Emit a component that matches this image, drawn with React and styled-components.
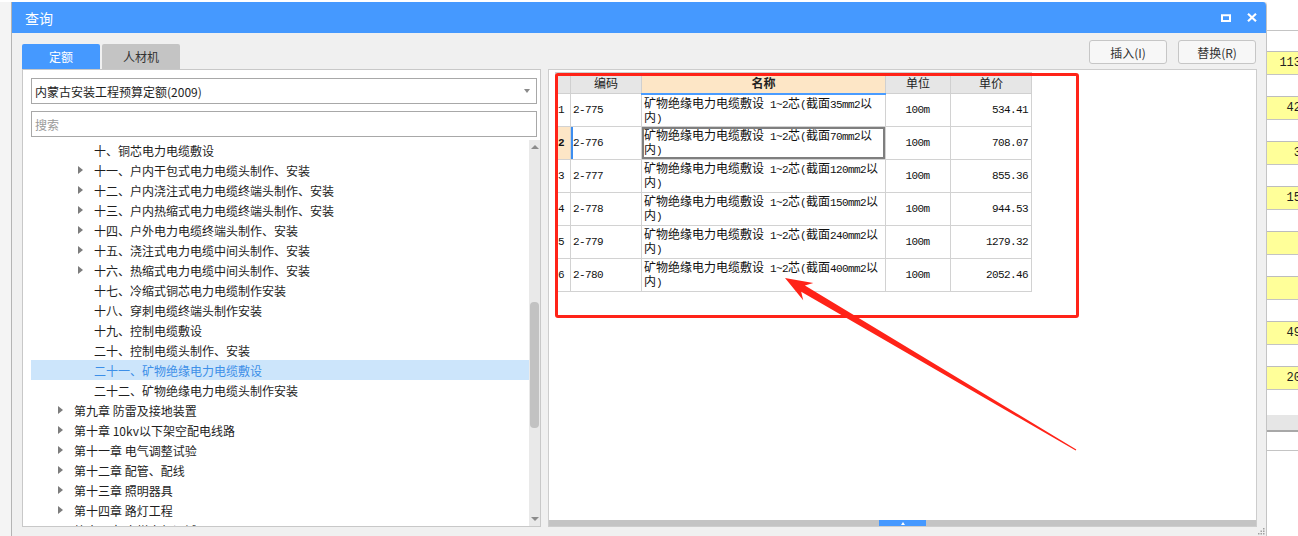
import React from 'react';
import styled, { createGlobalStyle } from 'styled-components';

const Global = createGlobalStyle`
  html, body { margin: 0; padding: 0; }
  body {
    background: #f4f4f4;
    font-family: "Noto Sans CJK SC", "Noto Sans", sans-serif;
    overflow: hidden;
  }
  *, *::before, *::after { box-sizing: border-box; }
`;

const Page = styled.div`
  width: 1298px;
  height: 536px;
  display: flex;
  flex-direction: column;
  overflow: hidden;
  background: #f4f4f4;
`;

const TopStrip = styled.div`
  height: 2px;
  flex-shrink: 0;
  background: #fff;
`;

const Main = styled.div`
  flex: 1;
  display: flex;
  min-height: 0;
`;

const LeftEdge = styled.div`
  width: 12px;
  flex-shrink: 0;
  background: #f4f4f4;
  border-right: 1px solid #b4b4b4;
`;

const Dialog = styled.div`
  width: 1255px;
  flex-shrink: 0;
  display: flex;
  flex-direction: column;
  background: #f0f0f0;
  border-right: 1px solid #c4c4c4;
  border-top-right-radius: 4px;
  overflow: hidden;
  position: relative;
`;

const TitleBar = styled.div`
  height: 31px;
  flex-shrink: 0;
  background: #4599ff;
  color: #fff;
  display: flex;
  align-items: center;
  padding: 0 9px 0 13px;
  font-size: 14px;
`;

const TitleText = styled.div`
  flex: 1;
`;

const TitleIcons = styled.div`
  display: flex;
  align-items: center;
  gap: 16px;
`;

const Body = styled.div`
  flex: 1;
  display: flex;
  gap: 7px;
  padding: 7px 9px 9px 10px;
  min-height: 0;
`;

const LeftCol = styled.div`
  width: 519px;
  flex-shrink: 0;
  display: flex;
  flex-direction: column;
  min-height: 0;
`;

const Tabs = styled.div`
  display: flex;
  gap: 2px;
  height: 25px;
  margin-top: 4px;
  flex-shrink: 0;
`;

const Tab = styled.div`
  width: 78px;
  display: flex;
  align-items: center;
  justify-content: center;
  font-size: 12px;
  border-radius: 2px 2px 0 0;
  background: ${p => (p.$active ? '#4599ff' : '#c4c4c4')};
  color: ${p => (p.$active ? '#fff' : '#333')};
`;

const LeftPanel = styled.div`
  flex: 1;
  background: #fff;
  border: 1px solid #c8c8c8;
  display: flex;
  flex-direction: column;
  min-height: 0;
`;

const Fields = styled.div`
  display: flex;
  flex-direction: column;
  gap: 7px;
  padding: 8px 3px 0 8px;
`;

const FieldBox = styled.div`
  height: 26px;
  border: 1px solid #a8a8a8;
  display: flex;
  align-items: center;
  padding: 0 6px 0 3px;
  font-size: 12px;
  color: ${p => (p.$placeholder ? '#9a9a9a' : '#1e1e1e')};
  background: #fff;
`;

const FieldText = styled.div`
  flex: 1;
`;

const DropCaret = styled.div`
  width: 0;
  height: 0;
  border-left: 3.5px solid transparent;
  border-right: 3.5px solid transparent;
  border-top: 4px solid #8a8a8a;
`;

const Tree = styled.div`
  flex: 1;
  display: flex;
  min-height: 0;
  margin: 3px 0 0 8px;
  overflow: hidden;
`;

const TreeList = styled.div`
  flex: 1;
  overflow: hidden;
`;

const TreeRow = styled.div`
  height: 20px;
  display: flex;
  align-items: center;
  padding-left: ${p => (p.$level === 1 ? 23 : 43)}px;
  font-size: 12px;
  white-space: nowrap;
  background: ${p => (p.$selected ? '#cce5fb' : 'transparent')};
  color: ${p => (p.$selected ? '#3d8fe8' : '#1e1e1e')};
`;

const CaretSlot = styled.div`
  width: 20px;
  flex-shrink: 0;
  display: flex;
  align-items: center;
`;

const Caret = styled.div`
  margin-left: 4px;
  width: 0;
  height: 0;
  border-top: 4px solid transparent;
  border-bottom: 4px solid transparent;
  border-left: 5px solid #7c7c7c;
  visibility: ${p => (p.$show ? 'visible' : 'hidden')};
`;

const VScroll = styled.div`
  width: 11px;
  flex-shrink: 0;
  background: #e9e9e9;
  display: flex;
  flex-direction: column;
  align-items: center;
`;

const ScrollArrow = styled.div`
  height: 14px;
  flex-shrink: 0;
  display: flex;
  align-items: center;
  justify-content: center;
  &::after {
    content: '';
    width: 0;
    height: 0;
    border-left: 4px solid transparent;
    border-right: 4px solid transparent;
    ${p => (p.$down ? 'border-top: 4px solid #8c8c8c;' : 'border-bottom: 4px solid #8c8c8c;')}
  }
`;

const VThumb = styled.div`
  width: 9px;
  height: 126px;
  margin-top: 148px;
  flex-shrink: 0;
  border-radius: 4px;
  background: #c2c2c2;
`;

const Fill = styled.div`
  flex: 1;
`;

const RightCol = styled.div`
  flex: 1;
  display: flex;
  flex-direction: column;
  min-width: 0;
  min-height: 0;
`;

const ButtonRow = styled.div`
  height: 24px;
  flex-shrink: 0;
  display: flex;
  justify-content: flex-end;
  gap: 11px;
  margin-bottom: 5px;
  padding-right: 1px;
`;

const Button = styled.div`
  width: 78px;
  height: 24px;
  display: flex;
  align-items: center;
  justify-content: center;
  background: #f7f7f7;
  border: 1px solid #c6c6c6;
  border-radius: 3px;
  font-size: 12px;
  color: #333;
`;

const RightPanel = styled.div`
  flex: 1;
  position: relative;
  background: #fff;
  border: 1px solid #cdcdcd;
  display: flex;
  flex-direction: column;
  min-height: 0;
`;

const TableArea = styled.div`
  flex: 1;
  padding: 2px 0 0 6px;
  min-height: 0;
`;

const Table = styled.table`
  border-collapse: collapse;
  table-layout: fixed;
  width: 476px;
`;

const Th = styled.th`
  height: 21px;
  padding: 0;
  border: 1px solid #d0d0d0;
  background: ${p => (p.$hl ? '#fde6c6' : '#e6e6e6')};
  ${p => (p.$hl ? 'border-bottom: 2px solid #4a9cff;' : '')}
  font-family: "Noto Sans CJK SC", sans-serif;
  font-size: 12px;
  font-weight: ${p => (p.$hl ? 'bold' : 'normal')};
  color: #222;
  text-align: center;
  line-height: 18px;
`;

const Td = styled.td`
  height: 33px;
  border: 1px solid #d2d2d2;
  padding: ${p => (p.$top ? '1px 2px 0 2px' : '0 3px 0 2px')};
  vertical-align: ${p => (p.$top ? 'top' : 'middle')};
  text-align: ${p => p.$align || 'left'};
  font-family: "Liberation Mono", "Noto Sans CJK SC", monospace;
  font-size: 11px;
  letter-spacing: -0.6px;
  line-height: 14px;
  color: #111;
  white-space: nowrap;
  overflow: hidden;
  background: ${p => (p.$peach ? '#fde6c6' : '#fff')};
  font-weight: ${p => (p.$bold ? 'bold' : 'normal')};
  box-shadow: ${p =>
    p.$boxed ? 'inset 0 0 0 2px #7f7f7f' : p.$blueLeft ? 'inset 2px 0 0 #3d8ef0' : 'none'};
`;

const Han = styled.span`
  font-family: "Noto Sans CJK SC", sans-serif;
  font-size: 12px;
  letter-spacing: 0;
`;

const Line = styled.div`
  height: 14px;
`;

const HScroll = styled.div`
  height: 6px;
  flex-shrink: 0;
  background: #c4c4c4;
  display: flex;
  justify-content: center;
`;

const HThumb = styled.div`
  width: 47px;
  background: #4599ff;
  display: flex;
  align-items: center;
  justify-content: center;
  &::after {
    content: '';
    width: 0;
    height: 0;
    border-left: 2.5px solid transparent;
    border-right: 2.5px solid transparent;
    border-bottom: 3px solid #fff;
  }
`;

const RedBox = styled.div`
  position: absolute;
  left: 6px;
  top: 3px;
  width: 524px;
  height: 245px;
  border: 3px solid #ff2318;
  border-radius: 3px;
  pointer-events: none;
`;

const ArrowSvg = styled.svg`
  position: absolute;
  left: 0;
  top: 0;
  overflow: visible;
  pointer-events: none;
`;

const Grip = styled.svg`
  position: absolute;
  right: 1px;
  bottom: 1px;
`;

const Sheet = styled.div`
  flex: 1;
  background: #fff;
  display: flex;
  flex-direction: column;
  align-items: flex-start;
  overflow: hidden;
  min-width: 0;
`;

const SheetRow = styled.div`
  width: 36px;
  height: ${p => p.$h}px;
  flex-shrink: 0;
  background: ${p => (p.$kind === 'yellow' ? '#ffff99' : p.$kind === 'grey' ? '#e6e6e6' : '#fff')};
  border-top: ${p => (p.$kind === 'yellow' ? '1px solid #bdbdbd' : 'none')};
  border-bottom: ${p =>
    p.$kind === 'yellow' || p.$line ? '1px solid #c4c4c4' : p.$kind === 'grey' ? '2px solid #a8a8a8' : 'none'};
  text-align: right;
  padding-right: 2px;
  font-family: "Liberation Mono", monospace;
  font-size: 12px;
  line-height: 22px;
  color: #222;
`;

function mixed(text) {
  const parts = text.split(/([\u2E80-\u9FFF\u3000-\u303F\uFF00-\uFFEF]+)/);
  return parts.map((part, i) =>
    /[\u2E80-\u9FFF\u3000-\u303F\uFF00-\uFFEF]/.test(part) ? <Han key={i}>{part}</Han> : part
  );
}

const treeItems = [
  { level: 2, text: '十、铜芯电力电缆敷设', caret: false },
  { level: 2, text: '十一、户内干包式电力电缆头制作、安装', caret: true },
  { level: 2, text: '十二、户内浇注式电力电缆终端头制作、安装', caret: true },
  { level: 2, text: '十三、户内热缩式电力电缆终端头制作、安装', caret: true },
  { level: 2, text: '十四、户外电力电缆终端头制作、安装', caret: true },
  { level: 2, text: '十五、浇注式电力电缆中间头制作、安装', caret: true },
  { level: 2, text: '十六、热缩式电力电缆中间头制作、安装', caret: true },
  { level: 2, text: '十七、冷缩式铜芯电力电缆制作安装', caret: false },
  { level: 2, text: '十八、穿刺电缆终端头制作安装', caret: false },
  { level: 2, text: '十九、控制电缆敷设', caret: false },
  { level: 2, text: '二十、控制电缆头制作、安装', caret: false },
  { level: 2, text: '二十一、矿物绝缘电力电缆敷设', caret: false, selected: true },
  { level: 2, text: '二十二、矿物绝缘电力电缆头制作安装', caret: false },
  { level: 1, text: '第九章 防雷及接地装置', caret: true },
  { level: 1, text: '第十章 10kv以下架空配电线路', caret: true },
  { level: 1, text: '第十一章 电气调整试验', caret: true },
  { level: 1, text: '第十二章 配管、配线', caret: true },
  { level: 1, text: '第十三章 照明器具', caret: true },
  { level: 1, text: '第十四章 路灯工程', caret: true },
  { level: 1, text: '第十五章 电梯电气调试', caret: true },
];

const rows = [
  { n: 1, code: '2-775', sec: '35', price: '534.41' },
  { n: 2, code: '2-776', sec: '70', price: '708.07', sel: true },
  { n: 3, code: '2-777', sec: '120', price: '855.36' },
  { n: 4, code: '2-778', sec: '150', price: '944.53' },
  { n: 5, code: '2-779', sec: '240', price: '1279.32' },
  { n: 6, code: '2-780', sec: '400', price: '2052.46' },
];

const sheetRows = (() => {
  const vals = ['113', '42', '3', '15', '', '', '49', '20'];
  const out = [{ h: 29, kind: 'white', line: true }, { h: 20, kind: 'white' }];
  vals.forEach((v, i) => {
    out.push({ h: 24, kind: 'yellow', text: v });
    out.push({ h: i === vals.length - 1 ? 25 : 21, kind: 'white' });
  });
  out.push({ h: 17, kind: 'grey' });
  out.push({ h: 19, kind: 'white', line: true });
  return out;
})();

// arrow geometry (panel-local coordinates)
const arrowPoints = (() => {
  const T = [236, 208];
  const E = [527, 380];
  const dx = E[0] - T[0];
  const dy = E[1] - T[1];
  const len = Math.hypot(dx, dy);
  const u = [dx / len, dy / len];
  const n = [-u[1], u[0]];
  const at = (t, w) => [T[0] + u[0] * t + n[0] * w, T[1] + u[1] * t + n[1] * w];
  const pts = [T, at(27, 10), at(21, 3.6), at(len, 0.6), at(len, -0.6), at(21, -3.6), at(27, -10)];
  return pts.map(p => `${p[0].toFixed(1)},${p[1].toFixed(1)}`).join(' ');
})();

export default function App() {
  return (
    <Page>
      <Global />
      <TopStrip />
      <Main>
        <LeftEdge />
        <Dialog>
          <TitleBar>
            <TitleText>查询</TitleText>
            <TitleIcons>
              <svg width="10" height="8" viewBox="0 0 10 8">
                <rect x="1" y="1.25" width="8" height="5.75" fill="none" stroke="#fff" strokeWidth="2" />
              </svg>
              <svg width="10" height="9" viewBox="0 0 10 9">
                <path d="M1 0.8 L9 8.2 M9 0.8 L1 8.2" stroke="#fff" strokeWidth="2.2" />
              </svg>
            </TitleIcons>
          </TitleBar>
          <Body>
            <LeftCol>
              <Tabs>
                <Tab $active>定额</Tab>
                <Tab>人材机</Tab>
              </Tabs>
              <LeftPanel>
                <Fields>
                  <FieldBox>
                    <FieldText>内蒙古安装工程预算定额(2009)</FieldText>
                    <DropCaret />
                  </FieldBox>
                  <FieldBox $placeholder>
                    <FieldText>搜索</FieldText>
                  </FieldBox>
                </Fields>
                <Tree>
                  <TreeList>
                    {treeItems.map((it, i) => (
                      <TreeRow key={i} $level={it.level} $selected={it.selected}>
                        <CaretSlot>
                          <Caret $show={it.caret} />
                        </CaretSlot>
                        {it.text}
                      </TreeRow>
                    ))}
                  </TreeList>
                  <VScroll>
                    <ScrollArrow />
                    <VThumb />
                    <Fill />
                    <ScrollArrow $down />
                  </VScroll>
                </Tree>
              </LeftPanel>
            </LeftCol>
            <RightCol>
              <ButtonRow>
                <Button>插入(I)</Button>
                <Button>替换(R)</Button>
              </ButtonRow>
              <RightPanel>
                <TableArea>
                  <Table>
                    <colgroup>
                      <col style={{ width: 15 }} />
                      <col style={{ width: 71 }} />
                      <col style={{ width: 244 }} />
                      <col style={{ width: 65 }} />
                      <col style={{ width: 81 }} />
                    </colgroup>
                    <thead>
                      <tr>
                        <Th />
                        <Th>编码</Th>
                        <Th $hl>名称</Th>
                        <Th>单位</Th>
                        <Th>单价</Th>
                      </tr>
                    </thead>
                    <tbody>
                      {rows.map(r => (
                        <tr key={r.n}>
                          <Td $peach={r.sel} $bold={r.sel}>{r.n}</Td>
                          <Td $blueLeft={r.sel}>{r.code}</Td>
                          <Td $top $boxed={r.sel}>
                            <Line>{mixed(`矿物绝缘电力电缆敷设 1~2芯(截面${r.sec}mm2以`)}</Line>
                            <Line>{mixed('内)')}</Line>
                          </Td>
                          <Td $align="center">100m</Td>
                          <Td $align="right">{r.price}</Td>
                        </tr>
                      ))}
                    </tbody>
                  </Table>
                </TableArea>
                <HScroll>
                  <HThumb />
                </HScroll>
                <RedBox />
                <ArrowSvg width="707" height="456">
                  <polygon points={arrowPoints} fill="#ff2318" />
                </ArrowSvg>
              </RightPanel>
            </RightCol>
          </Body>
          <Grip width="7" height="7" viewBox="0 0 7 7">
            <rect x="5" y="0" width="1.5" height="1.5" fill="#a0a0a0" />
            <rect x="2.5" y="2.5" width="1.5" height="1.5" fill="#a0a0a0" />
            <rect x="5" y="2.5" width="1.5" height="1.5" fill="#a0a0a0" />
            <rect x="0" y="5" width="1.5" height="1.5" fill="#a0a0a0" />
            <rect x="2.5" y="5" width="1.5" height="1.5" fill="#a0a0a0" />
            <rect x="5" y="5" width="1.5" height="1.5" fill="#a0a0a0" />
          </Grip>
        </Dialog>
        <Sheet>
          {sheetRows.map((r, i) => (
            <SheetRow key={i} $h={r.h} $kind={r.kind} $line={r.line}>
              {r.text}
            </SheetRow>
          ))}
        </Sheet>
      </Main>
    </Page>
  );
}
